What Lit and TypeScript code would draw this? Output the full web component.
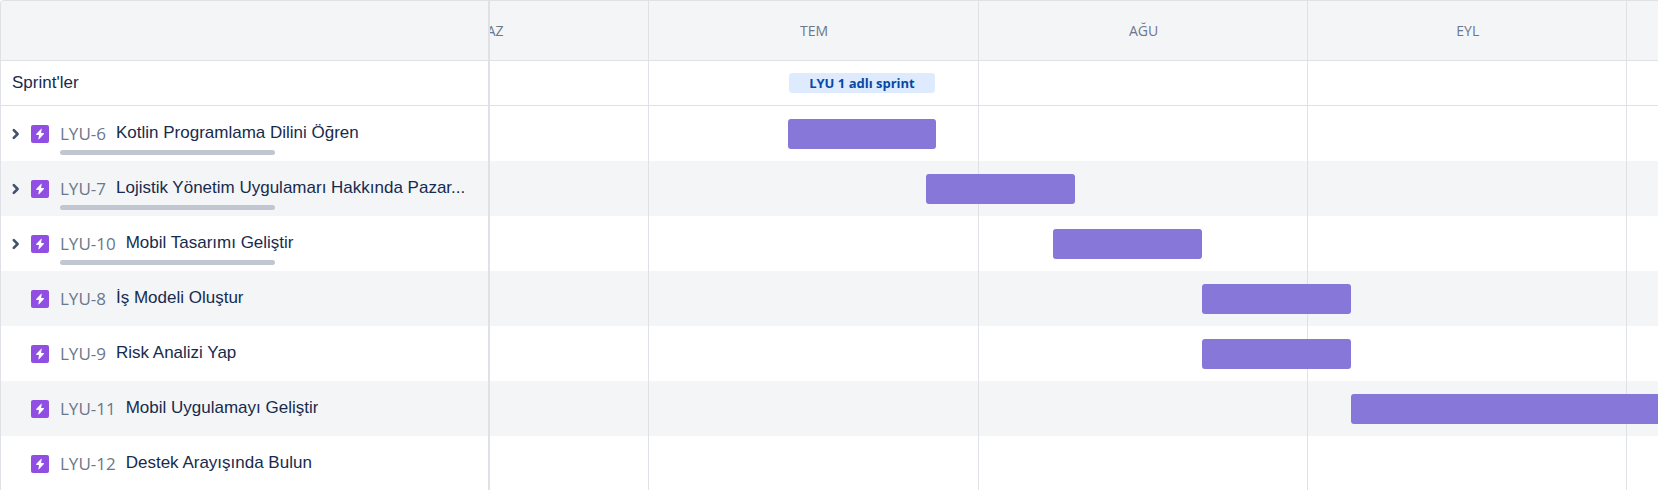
import { LitElement, html, css, nothing } from "lit";
import { customElement, state } from "lit/decorators.js";
import { classMap } from "lit/directives/class-map.js";
import { styleMap } from "lit/directives/style-map.js";

interface Month {
  name: string;
  days: number;
}

interface Epic {
  key: string;
  title: string;
  hasChildren: boolean;
  start?: number;
  length?: number;
}

const MONTHS: Month[] = [
  { name: "HAZ", days: 30 },
  { name: "TEM", days: 31 },
  { name: "AĞU", days: 31 },
  { name: "EYL", days: 30 },
  { name: "", days: 31 },
];

// Day numbers count from 1 June.
const EPICS: Epic[] = [
  { key: "LYU-6", title: "Kotlin Programlama Dilini Öğren", hasChildren: true, start: 43, length: 14 },
  { key: "LYU-7", title: "Lojistik Yönetim Uygulamarı Hakkında Pazar...", hasChildren: true, start: 56, length: 14 },
  { key: "LYU-10", title: "Mobil Tasarımı Geliştir", hasChildren: true, start: 68, length: 14 },
  { key: "LYU-8", title: "İş Modeli Oluştur", hasChildren: false, start: 82, length: 14 },
  { key: "LYU-9", title: "Risk Analizi Yap", hasChildren: false, start: 82, length: 14 },
  { key: "LYU-11", title: "Mobil Uygulamayı Geliştir", hasChildren: false, start: 96, length: 45 },
  { key: "LYU-12", title: "Destek Arayışında Bulun", hasChildren: false },
];

const SPRINT = { name: "LYU 1 adlı sprint", start: 43, length: 14 };

const TOTAL_DAYS = MONTHS.reduce((sum, m) => sum + m.days, 0);
const VISIBLE_DAYS = 109.9;
const SCROLLED_DAYS = 15;

const share = (days: number, of: number) => `${(days / of) * 100}%`;

@customElement("app-root")
export class AppRoot extends LitElement {
  static styles = css`
    :host {
      display: block;
      height: 100vh;
      overflow: hidden;
      box-sizing: border-box;
      font-family: "Open Sans", "Noto Sans", sans-serif;
      color: #172b4d;
      background: #ffffff;
    }
    * {
      box-sizing: border-box;
    }
    .roadmap {
      display: flex;
      height: 100%;
      border: 1px solid #dfe1e6;
      border-width: 1px 0 0 1px;
      border-top-left-radius: 4px;
      overflow: hidden;
    }
    .side {
      flex: 0 0 auto;
      width: 489px;
      border-right: 2px solid #dfe1e6;
    }
    .timeline {
      flex: 1;
      min-width: 0;
      overflow: hidden;
    }
    .canvas {
      position: relative;
    }
    .head {
      height: 60px;
      background: #f4f5f7;
      border-bottom: 1px solid #dfe1e6;
    }
    .sprints {
      display: flex;
      align-items: center;
      height: 45px;
      border-bottom: 1px solid #dfe1e6;
    }
    .sprints-title {
      margin: 0;
      padding-left: 11px;
      font: 400 17px/22px "Liberation Sans", Arial, sans-serif;
    }
    .list {
      list-style: none;
      margin: 0;
      padding: 0;
    }
    .row {
      height: 55px;
    }
    .row:nth-child(even) {
      background: #f4f5f7;
    }
    .epic {
      display: flex;
      align-items: flex-start;
      padding: 17px 14px 0 8px;
    }
    .toggle {
      display: flex;
      align-items: center;
      justify-content: center;
      width: 14px;
      height: 22px;
      margin-right: 8px;
      padding: 0;
      border: 0;
      background: none;
      color: #42526e;
      cursor: pointer;
    }
    .toggle.none {
      cursor: default;
    }
    .toggle.open svg {
      transform: rotate(90deg);
    }
    .kind {
      flex: none;
      width: 18px;
      height: 18px;
      margin: 2px 11px 0 0;
    }
    .detail {
      flex: 1;
      min-width: 0;
    }
    .line {
      display: flex;
      gap: 10px;
      height: 22px;
      white-space: nowrap;
    }
    .key {
      color: #6b778c;
      font-size: 17px;
      line-height: 22px;
      text-decoration: none;
    }
    .title {
      min-width: 0;
      overflow: hidden;
      text-overflow: ellipsis;
      font: 400 17px/20px "Liberation Sans", Arial, sans-serif;
    }
    .progress {
      width: 52%;
      height: 5px;
      margin-top: 5px;
      border-radius: 3px;
      background: #c1c7d0;
    }
    .months {
      display: flex;
    }
    .month {
      display: flex;
      align-items: center;
      justify-content: center;
      color: #6b778c;
      font-size: 14px;
    }
    .grid {
      position: absolute;
      inset: 0;
      display: flex;
      pointer-events: none;
    }
    .grid-col {
      border-right: 1px solid #dfe1e6;
    }
    .sprint {
      position: relative;
      height: 20px;
      border: 0;
      border-left: 1px solid transparent;
      border-right: 1px solid transparent;
      background: #deebff;
      background-clip: padding-box;
      border-radius: 4px;
      color: #0747a6;
      font: 700 13px/20px "Open Sans", "Noto Sans", sans-serif;
      text-align: center;
      padding: 0;
      white-space: nowrap;
    }
    .track {
      padding-top: 13px;
    }
    .bar {
      position: relative;
      z-index: 1;
      display: block;
      height: 30px;
      padding: 0;
      border: 0;
      border-radius: 3px;
      background: #8777d9;
      cursor: pointer;
    }
  `;

  @state() private open = new Set<string>();

  private toggle(key: string) {
    const next = new Set(this.open);
    if (!next.delete(key)) next.add(key);
    this.open = next;
  }

  private renderEpic(epic: Epic) {
    const isOpen = this.open.has(epic.key);
    return html`
      <li class="row epic">
        ${epic.hasChildren
          ? html`<button
              class=${classMap({ toggle: true, open: isOpen })}
              aria-label=${epic.title}
              aria-expanded=${isOpen ? "true" : "false"}
              @click=${() => this.toggle(epic.key)}
            >
              <svg width="10" height="12" viewBox="0 0 10 12" fill="none" aria-hidden="true">
                <path d="M2.8 2.2 L6.6 6 L2.8 9.8" stroke="currentColor" stroke-width="2.6" stroke-linecap="round" stroke-linejoin="round" />
              </svg>
            </button>`
          : html`<span class="toggle none"></span>`}
        <svg class="kind" viewBox="0 0 18 18" aria-hidden="true">
          <rect width="18" height="18" rx="2" fill="#904ee2" />
          <path d="M10.2 3.7 L5.2 9 Q4.8 9.8 5.6 9.9 L8 9.9 L7.4 14.1 Q7.6 14.6 8 14.2 L12.9 9 Q13.2 8.2 12.5 8.1 L10.1 8.1 L10.7 4 Q10.6 3.4 10.2 3.7 Z" fill="#ffffff" />
        </svg>
        <div class="detail">
          <div class="line">
            <a class="key" href="#${epic.key}">${epic.key}</a>
            <span class="title">${epic.title}</span>
          </div>
          ${epic.hasChildren ? html`<div class="progress"></div>` : nothing}
        </div>
      </li>
    `;
  }

  private span(start: number, length: number) {
    return styleMap({
      marginLeft: share(start, TOTAL_DAYS),
      width: share(length, TOTAL_DAYS),
    });
  }

  render() {
    return html`
      <main class="roadmap">
        <section class="side">
          <div class="head"></div>
          <div class="sprints"><h2 class="sprints-title">Sprint'ler</h2></div>
          <ul class="list">
            ${EPICS.map((epic) => this.renderEpic(epic))}
          </ul>
        </section>
        <section class="timeline">
          <div
            class="canvas"
            style=${styleMap({
              width: share(TOTAL_DAYS, VISIBLE_DAYS),
              marginLeft: share(-SCROLLED_DAYS, VISIBLE_DAYS),
            })}
          >
            <div class="head months">
              ${MONTHS.map(
                (m) => html`<div class="month" style=${styleMap({ width: share(m.days, TOTAL_DAYS) })}>${m.name}</div>`
              )}
            </div>
            <div class="grid">
              ${MONTHS.map(
                (m) => html`<div class="grid-col" style=${styleMap({ width: share(m.days, TOTAL_DAYS) })}></div>`
              )}
            </div>
            <div class="sprints">
              <button class="sprint" style=${this.span(SPRINT.start, SPRINT.length)}>${SPRINT.name}</button>
            </div>
            <ul class="list">
              ${EPICS.map(
                (epic) => html`<li class="row track">
                  ${epic.start !== undefined && epic.length !== undefined
                    ? html`<button class="bar" aria-label=${epic.title} style=${this.span(epic.start, epic.length)}></button>`
                    : nothing}
                </li>`
              )}
            </ul>
          </div>
        </section>
      </main>
    `;
  }
}
